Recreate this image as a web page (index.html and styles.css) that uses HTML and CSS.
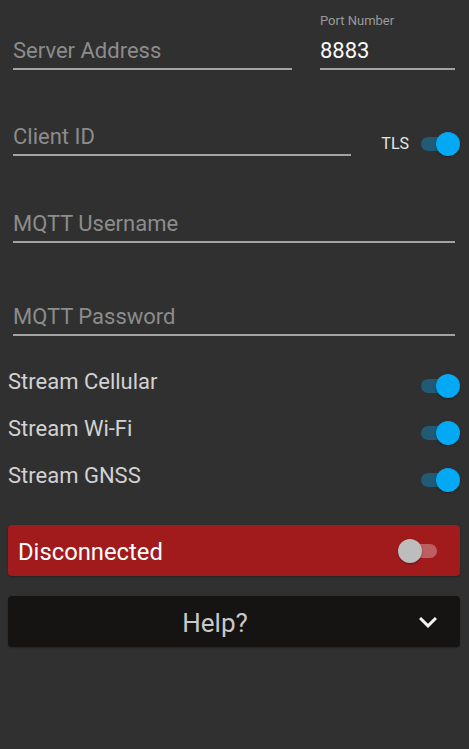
FILE: index.html
```html
<!DOCTYPE html>
<html>
<head>
<meta charset="utf-8">
<link rel="stylesheet" href="styles.css">
</head>
<body>
<div class="screen">
  <div class="row-server">
    <div class="field field-server"><span class="hint">Server Address</span></div>
    <div class="port">
      <div class="port-label">Port Number</div>
      <div class="field"><span class="value">8883</span></div>
    </div>
  </div>
  <div class="row-client">
    <div class="field field-client"><span class="hint">Client ID</span></div>
    <div class="tls">
      <span class="tls-label">TLS</span>
      <span class="switch on"><span class="track"></span><span class="thumb"></span></span>
    </div>
  </div>
  <div class="field field-user"><span class="hint">MQTT Username</span></div>
  <div class="field field-pass"><span class="hint">MQTT Password</span></div>
  <div class="streams">
    <div class="stream-row">
      <span class="stream-label">Stream Cellular</span>
      <span class="switch on"><span class="track"></span><span class="thumb"></span></span>
    </div>
    <div class="stream-row">
      <span class="stream-label">Stream Wi-Fi</span>
      <span class="switch on"><span class="track"></span><span class="thumb"></span></span>
    </div>
    <div class="stream-row">
      <span class="stream-label">Stream GNSS</span>
      <span class="switch on"><span class="track"></span><span class="thumb"></span></span>
    </div>
  </div>
  <div class="status-bar">
    <span class="status-text">Disconnected</span>
    <span class="switch off"><span class="track"></span><span class="thumb"></span></span>
  </div>
  <div class="help-bar">
    <span class="help-text">Help?</span>
    <svg class="chevron" width="36" height="36" viewBox="0 0 24 24"><path d="M16.59 8.59L12 13.17 7.41 8.59 6 10l6 6 6-6z" fill="#f2f2f2"/></svg>
  </div>
</div>
</body>
</html>
```
FILE: styles.css
```css
html, body {
  margin: 0;
  padding: 0;
  background: #303030;
  font-family: Roboto, "Noto Sans", sans-serif;
}

.screen {
  width: 469px;
  height: 749px;
  box-sizing: border-box;
  padding: 13px 9px 0 8px;
}

.field {
  font-size: 22px;
  line-height: 26px;
  padding-bottom: 4px;
  border-bottom: 2px solid #a3a3a3;
}

.hint {
  color: #8c8c8c;
}

.value {
  color: #fafafa;
}

.row-server {
  display: flex;
  align-items: flex-end;
  gap: 28px;
  margin: 0 5px;
}

.field-server {
  flex: 1;
}

.port {
  width: 135px;
}

.port-label {
  font-size: 13px;
  line-height: 16px;
  color: #9a9a9a;
  margin-bottom: 9px;
}

.row-client {
  display: flex;
  align-items: flex-end;
  margin: 54px 0 0 5px;
}

.field-client {
  width: 338px;
}

.tls {
  margin-left: auto;
  display: flex;
  align-items: center;
  gap: 12px;
}

.tls-label {
  font-size: 16px;
  line-height: 24px;
  padding-top: 1px;
  color: #e6e6e6;
}

.field-user {
  margin: 55px 5px 0;
}

.field-pass {
  margin: 61px 5px 0;
}

.streams {
  margin-top: 26px;
}

.stream-row {
  height: 47px;
  display: flex;
  align-items: center;
  justify-content: space-between;
}

.stream-label {
  font-size: 22px;
  line-height: 26px;
  padding-bottom: 8px;
  color: #d2d2d2;
}

.switch {
  position: relative;
  display: block;
  width: 39px;
  height: 24px;
  flex: none;
}

.track {
  position: absolute;
  top: 5px;
  width: 34px;
  height: 14px;
  border-radius: 7px;
}

.thumb {
  position: absolute;
  top: 0;
  width: 24px;
  height: 24px;
  border-radius: 50%;
  box-shadow: 0 1px 2px rgba(0, 0, 0, 0.35);
}

.on .track {
  left: 0;
  background: rgba(3, 169, 244, 0.35);
}

.on .thumb {
  right: 0;
  background: #03a9f4;
}

.off .track {
  right: 0;
  background: rgba(255, 255, 255, 0.3);
}

.off .thumb {
  left: 0;
  background: #bdbdbd;
}

.status-bar {
  margin-top: 22px;
  height: 51px;
  box-sizing: border-box;
  background: #a11a1c;
  border-radius: 4px;
  display: flex;
  align-items: center;
  justify-content: space-between;
  padding: 0 23px 0 10px;
  box-shadow: 0 1px 2px rgba(0, 0, 0, 0.3);
}

.status-text {
  font-size: 23.8px;
  line-height: 26px;
  padding-top: 3px;
  color: #ffffff;
}

.help-bar {
  margin-top: 20px;
  height: 51px;
  background: #161313;
  border-radius: 4px;
  display: flex;
  align-items: center;
  box-shadow: 0 1px 2px rgba(0, 0, 0, 0.3);
}

.help-text {
  flex: 1;
  text-align: center;
  padding-left: 12px;
  padding-top: 2px;
  font-size: 26px;
  line-height: 30px;
  color: #c8c8c8;
}

.chevron {
  display: block;
  margin-right: 14px;
}
```
